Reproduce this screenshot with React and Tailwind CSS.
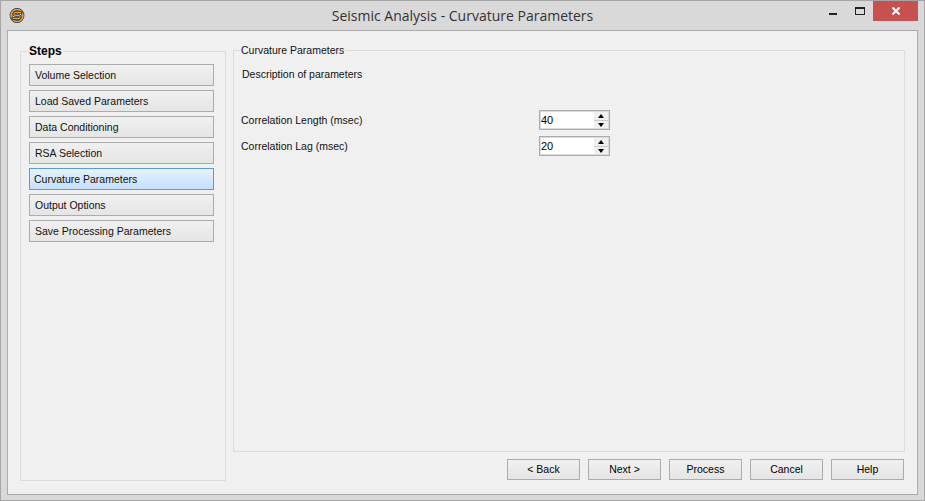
import React from "react";

const steps = [
  "Volume Selection",
  "Load Saved Parameters",
  "Data Conditioning",
  "RSA Selection",
  "Curvature Parameters",
  "Output Options",
  "Save Processing Parameters",
];

const Logo = () => (
  <svg width="16" height="15" viewBox="0 0 16 15" fill="none" className="-ml-px">
    <circle cx="8" cy="7.5" r="6" stroke="#12344f" strokeWidth="2.8" />
    <circle cx="8" cy="7.5" r="6" stroke="#f5a030" strokeWidth="1.6" />
    <path d="M13.5 4.5H6.2c-1.6 0-1.6 3 0 3h3.6c1.6 0 1.6 3 0 3H2.5" stroke="#12344f" strokeWidth="2.4" />
    <path d="M12.5 4.5H6.2c-1.6 0-1.6 3 0 3h3.6c1.6 0 1.6 3 0 3H3.5" stroke="#f5a030" strokeWidth="1.2" />
  </svg>
);

const Spinner = ({ value }) => (
  <div className="flex h-5 w-[71px] border border-[#ababab] bg-white p-px shadow-[inset_0_0_0_1px_#dcdcdc]">
    <span className="flex-1 text-[11px] leading-4 text-black">{value}</span>
    <div className="flex w-[15px] flex-col pl-px">
      <div className="flex h-[8px] items-center justify-center bg-[#f0f0f0]">
        <div className="h-0 w-0 border-x-[3.5px] border-b-[4px] border-x-transparent border-b-black" />
      </div>
      <div className="h-px bg-[#c8c8c8]" />
      <div className="flex h-[7px] items-center justify-center bg-[#f0f0f0]">
        <div className="h-0 w-0 border-x-[3.5px] border-t-[4px] border-x-transparent border-t-black" />
      </div>
    </div>
  </div>
);

const FooterButton = ({ children }) => (
  <button className="h-[21px] w-[73px] border border-[#acacac] bg-gradient-to-b from-[#f0f0f0] to-[#e5e5e5] text-[10.5px] text-black">
    {children}
  </button>
);

const App = () => {
  return (
    <div
      className="flex h-[501px] w-[925px] flex-col border border-[#a6a6a6] bg-[#d9d9d9] text-[10.5px] text-[#111]"
      style={{ fontFamily: '"Liberation Sans", Arial, sans-serif' }}
    >
      <div className="relative flex h-[29px] items-center pl-[9px]">
        <Logo />
        <div
          className="flex-1 pr-[24px] text-center text-[14px] text-[#333]"
          style={{ fontFamily: '"Open Sans", sans-serif' }}
        >
          Seismic Analysis - Curvature Parameters
        </div>
        <div className="absolute right-[6px] top-0 flex h-5 items-start">
          <div className="mr-[18px] mt-3 h-[2px] w-2 bg-[#222]" />
          <div className="mr-[8px] mt-[6px] h-[8px] w-[10px] border border-t-2 border-[#222]" />
          <div className="flex h-5 w-[45px] items-center justify-center bg-[#c75050] text-white">
            <svg width="8" height="8" viewBox="0 0 8 8">
              <path d="M0.5 0.5L7.5 7.5M7.5 0.5L0.5 7.5" stroke="#fff" strokeWidth="2" />
            </svg>
          </div>
        </div>
      </div>

      <div className="mx-[6px] mb-[5px] flex flex-1 gap-[7px] border border-[#ababab] bg-[#f0f0f0] pl-3 pr-3 pt-[13px]">
        <fieldset className="h-[437px] w-[206px] border border-[#dcdcdc] pl-2 pr-[11px]">
          <legend className="-mt-px pr-px text-[12px] leading-[15px] font-bold text-black">Steps</legend>
          <div className="mt-[5px] flex flex-col gap-1">
            {steps.map((step) =>
              step === "Curvature Parameters" ? (
                <div
                  key={step}
                  className="flex h-[22px] items-center border border-[#5b9bd5] bg-gradient-to-b from-[#e6f2fd] to-[#c4e0fb] pl-[4px] pt-px text-[#111]"
                >
                  {step}
                </div>
              ) : (
                <div
                  key={step}
                  className="flex h-[22px] items-center border border-[#acacac] bg-gradient-to-b from-[#f0f0f0] to-[#e5e5e5] pl-[5px] pt-px text-[#111]"
                >
                  {step}
                </div>
              )
            )}
          </div>
        </fieldset>

        <div className="-mt-px flex flex-1 flex-col">
          <fieldset className="h-[409px] border border-[#dcdcdc] px-[7px]">
            <legend className="pr-px text-[10.5px] leading-[14px] text-[#111]">Curvature Parameters</legend>
            <p className="ml-px mt-[10px] leading-[14px]">Description of parameters</p>
            <div className="mt-[29px] flex flex-col gap-1.5">
              <div className="flex items-center">
                <span className="w-[298px] pt-0.5">Correlation Length (msec)</span>
                <Spinner value="40" />
              </div>
              <div className="flex items-center">
                <span className="w-[298px] pt-0.5">Correlation Lag (msec)</span>
                <Spinner value="20" />
              </div>
            </div>
          </fieldset>
          <div className="mt-[7px] flex justify-end gap-2 pr-px">
            <FooterButton>&lt; Back</FooterButton>
            <FooterButton>Next &gt;</FooterButton>
            <FooterButton>Process</FooterButton>
            <FooterButton>Cancel</FooterButton>
            <FooterButton>Help</FooterButton>
          </div>
        </div>
      </div>
    </div>
  );
};

export default App;
